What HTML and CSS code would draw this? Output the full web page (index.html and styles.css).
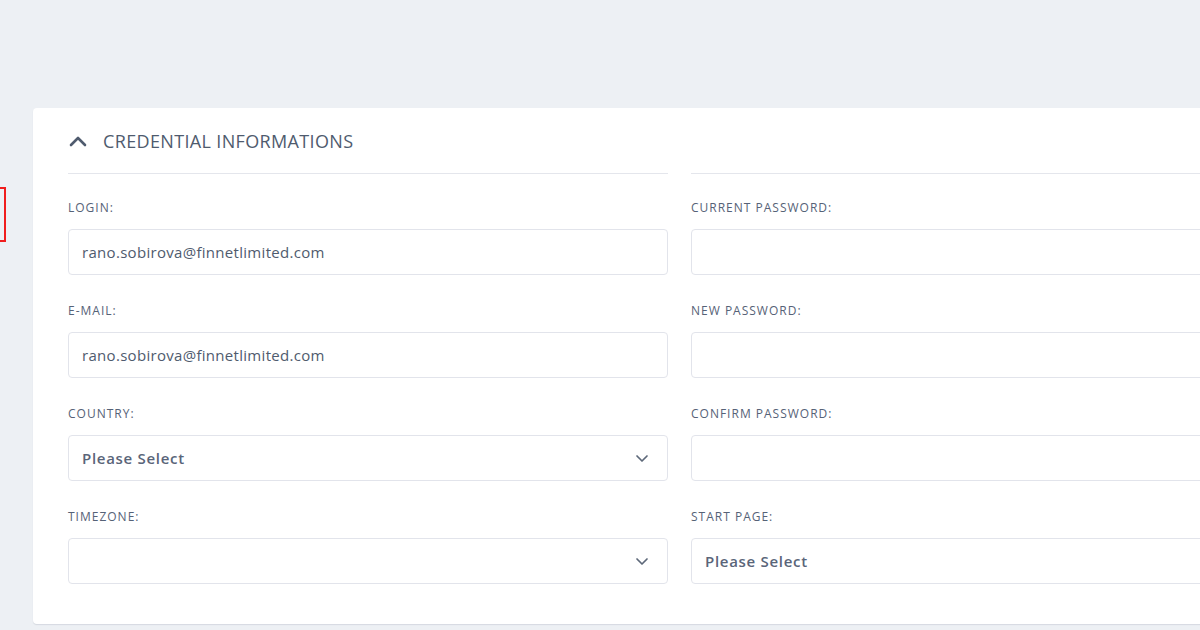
FILE: index.html
```html
<!DOCTYPE html>
<html lang="en">
<head>
    <meta charset="UTF-8">
    <meta name="viewport" content="width=device-width, initial-scale=1.0">
    <title>Credential Informations</title>
    <link rel="stylesheet" href="styles.css">
</head>
<body>

    <div class="marker"></div>

    <div class="card">
        <div class="columns">
            <div class="column">
                <div class="section-head">
                    <svg class="toggle" width="18" height="12" viewBox="0 0 18 12">
                        <path d="M2 10 L9 3 L16 10" fill="none" stroke="#4f5b6e" stroke-width="2.6" stroke-linecap="round" stroke-linejoin="round"/>
                    </svg>
                    <h3>CREDENTIAL INFORMATIONS</h3>
                </div>
                <div class="fields">
                    <div class="form-group">
                        <label for="login">LOGIN:</label>
                        <input type="text" id="login" value="rano.sobirova@finnetlimited.com">
                    </div>
                    <div class="form-group">
                        <label for="email">E-MAIL:</label>
                        <input type="email" id="email" value="rano.sobirova@finnetlimited.com">
                    </div>
                    <div class="form-group">
                        <label for="country">COUNTRY:</label>
                        <div class="select">
                            <span class="select-value">Please Select</span>
                            <svg class="caret" width="14" height="9" viewBox="0 0 14 9">
                                <path d="M2 2 L7 7 L12 2" fill="none" stroke="#5d6879" stroke-width="1.7" stroke-linecap="round" stroke-linejoin="round"/>
                            </svg>
                        </div>
                    </div>
                    <div class="form-group">
                        <label for="timezone">TIMEZONE:</label>
                        <div class="select">
                            <span class="select-value"></span>
                            <svg class="caret" width="14" height="9" viewBox="0 0 14 9">
                                <path d="M2 2 L7 7 L12 2" fill="none" stroke="#5d6879" stroke-width="1.7" stroke-linecap="round" stroke-linejoin="round"/>
                            </svg>
                        </div>
                    </div>
                </div>
            </div>

            <div class="column">
                <div class="section-head"></div>
                <div class="fields">
                    <div class="form-group">
                        <label for="currentPassword">CURRENT PASSWORD:</label>
                        <input type="password" id="currentPassword">
                    </div>
                    <div class="form-group">
                        <label for="newPassword">NEW PASSWORD:</label>
                        <input type="password" id="newPassword">
                    </div>
                    <div class="form-group">
                        <label for="confirmPassword">CONFIRM PASSWORD:</label>
                        <input type="password" id="confirmPassword">
                    </div>
                    <div class="form-group">
                        <label for="startPage">START PAGE:</label>
                        <div class="select">
                            <span class="select-value">Please Select</span>
                        </div>
                    </div>
                </div>
            </div>
        </div>
    </div>

</body>
</html>
```

FILE: styles.css
```css
html, body {
    height: 100%;
}
body {
    font-family: "Open Sans", Arial, sans-serif;
    background-color: #edf0f4;
    margin: 0;
    padding: 108px 0 0 33px;
    overflow: hidden;
    box-sizing: border-box;
    color: #4f5b6e;
}
.marker {
    position: absolute;
    left: -48px;
    top: 187px;
    width: 50px;
    height: 51px;
    border: 2px solid #f01d1d;
}
.card {
    width: 1300px;
    background: #fff;
    border-radius: 4px;
    box-shadow: 0 1px 1px rgba(40, 50, 80, 0.12);
    padding: 0 35px 40px;
    box-sizing: border-box;
}
.columns {
    display: grid;
    grid-template-columns: 600px 600px;
    column-gap: 23px;
}
.section-head {
    height: 65px;
    border-bottom: 1px solid #e4e6ec;
    display: flex;
    align-items: center;
    padding-left: 1px;
}
.section-head h3 {
    margin: 0 0 0 16px;
    font-size: 18px;
    font-weight: 400;
    letter-spacing: 0.35px;
    color: #4f5b6e;
}
.toggle {
    display: block;
}
.fields {
    padding-top: 26px;
}
.form-group {
    margin-bottom: 28px;
}
.form-group:last-child {
    margin-bottom: 0;
}
.form-group label {
    display: block;
    font-size: 12px;
    line-height: 16px;
    margin-bottom: 13px;
    color: #566277;
    letter-spacing: 1px;
}
.form-group input, .select {
    display: flex;
    align-items: center;
    width: 100%;
    height: 46px;
    box-sizing: border-box;
    padding: 0 13px;
    border: 1px solid #e2e4eb;
    border-radius: 4px;
    background: #fff;
    font-family: inherit;
    font-size: 15px;
    letter-spacing: 0.3px;
    color: #4f5b6e;
    outline: none;
}
.select-value {
    flex: 1;
    font-size: 15px;
    font-weight: 600;
    letter-spacing: 0.7px;
    color: #5a6579;
}
.caret {
    display: block;
    margin-right: 5px;
}
```
